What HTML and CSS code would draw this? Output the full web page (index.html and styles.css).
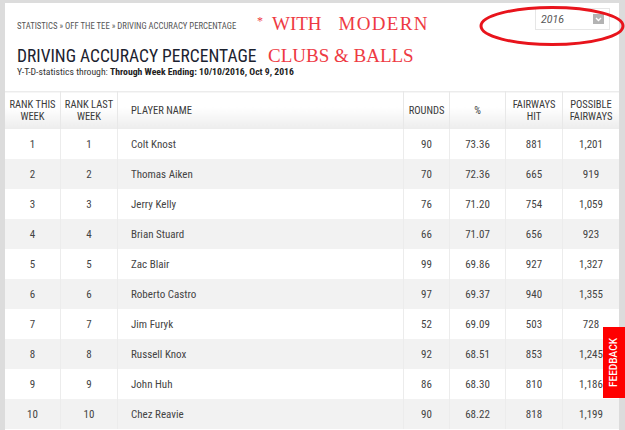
FILE: index.html
```html
<!DOCTYPE html>
<html>
<head>
<meta charset="utf-8">
<link rel="stylesheet" href="styles.css">
</head>
<body>
<div class="page">
  <div class="top">
    <div class="heading">
      <div class="crumbs">STATISTICS » OFF THE TEE » DRIVING ACCURACY PERCENTAGE</div>
      <h1 class="title">DRIVING ACCURACY PERCENTAGE</h1>
      <div class="sub">Y-T-D-statistics through: <b>Through Week Ending: 10/10/2016, Oct 9, 2016</b></div>
    </div>
    <div class="select">
      <span class="year">2016</span>
      <span class="arrow"><svg width="11" height="10" viewBox="0 0 11 10"><path d="M3 4 L5.5 6.5 L8 4" fill="none" stroke="#fff" stroke-width="1.4"/></svg></span>
    </div>
  </div>
  <table class="stats">
    <thead>
      <tr>
        <th class="c1">RANK THIS<br>WEEK</th>
        <th class="c2">RANK LAST<br>WEEK</th>
        <th class="name">PLAYER NAME</th>
        <th class="c4">ROUNDS</th>
        <th class="c5">%</th>
        <th class="c6">FAIRWAYS<br>HIT</th>
        <th class="c7">POSSIBLE<br>FAIRWAYS</th>
      </tr>
    </thead>
    <tbody>
      <tr><td>1</td><td>1</td><td class="name">Colt Knost</td><td>90</td><td>73.36</td><td>881</td><td>1,201</td></tr>
      <tr><td>2</td><td>2</td><td class="name">Thomas Aiken</td><td>70</td><td>72.36</td><td>665</td><td>919</td></tr>
      <tr><td>3</td><td>3</td><td class="name">Jerry Kelly</td><td>76</td><td>71.20</td><td>754</td><td>1,059</td></tr>
      <tr><td>4</td><td>4</td><td class="name">Brian Stuard</td><td>66</td><td>71.07</td><td>656</td><td>923</td></tr>
      <tr><td>5</td><td>5</td><td class="name">Zac Blair</td><td>99</td><td>69.86</td><td>927</td><td>1,327</td></tr>
      <tr><td>6</td><td>6</td><td class="name">Roberto Castro</td><td>97</td><td>69.37</td><td>940</td><td>1,355</td></tr>
      <tr><td>7</td><td>7</td><td class="name">Jim Furyk</td><td>52</td><td>69.09</td><td>503</td><td>728</td></tr>
      <tr><td>8</td><td>8</td><td class="name">Russell Knox</td><td>92</td><td>68.51</td><td>853</td><td>1,245</td></tr>
      <tr><td>9</td><td>9</td><td class="name">John Huh</td><td>86</td><td>68.30</td><td>810</td><td>1,186</td></tr>
      <tr><td>10</td><td>10</td><td class="name">Chez Reavie</td><td>90</td><td>68.22</td><td>818</td><td>1,199</td></tr>
    </tbody>
  </table>
</div>
<div class="note note1"><span class="star">*</span><span class="w1">WITH</span><span class="w2">MODERN</span></div>
<div class="note note2">CLUBS &amp; BALLS</div>
<svg class="circle" width="150" height="44" viewBox="0 0 150 44"><ellipse cx="74" cy="20" rx="71" ry="18.5" fill="none" stroke="#e8141c" stroke-width="3"/></svg>
<div class="feedback"><span>FEEDBACK</span></div>
</body>
</html>
```

FILE: styles.css
```css
html, body {
  margin: 0;
  padding: 0;
  background: #dcdcdc;
  height: 100%;
  overflow: hidden;
}
body {
  font-family: "Roboto Condensed", Roboto, "Liberation Sans", sans-serif;
  color: #333;
  position: relative;
}
.page {
  margin: 3px 0 0 5px;
  width: 614px;
  height: 427px;
  background: #fff;
}
.top {
  display: flex;
  justify-content: space-between;
  align-items: flex-start;
  padding: 5px 9px 0 12px;
}
.heading {
  padding-top: 12px;
}
.crumbs {
  font-size: 8.7px;
  line-height: 13px;
  color: #555;
}
.title {
  margin: 13px 0 0 0;
  font-size: 17.5px;
  line-height: 20px;
  font-weight: 400;
  color: #1c2230;
}
.sub {
  font-size: 9.7px;
  line-height: 12px;
  color: #333;
}
.sub b {
  font-weight: 700;
  color: #222;
}
.select {
  width: 75px;
  height: 22px;
  box-sizing: border-box;
  border: 1px solid #e6e6e6;
  display: flex;
  align-items: center;
  justify-content: space-between;
  padding: 0 5px 0 5px;
}
.year {
  font-family: Roboto, sans-serif;
  font-style: italic;
  font-size: 10.5px;
  color: #555;
}
.arrow {
  width: 11px;
  height: 10px;
  background: #b3b3b3;
  display: flex;
}
.stats {
  margin-top: 13px;
  width: 614px;
  border-collapse: collapse;
  table-layout: fixed;
  font-size: 11px;
  color: #444;
}
.stats th {
  height: 37px;
  padding: 0;
  font-size: 10.5px;
  font-weight: 400;
  line-height: 12px;
  color: #3a3a3a;
  text-align: center;
  border-top: 1px solid #ececec;
  border-right: 1px solid #e8e8e8;
  background: linear-gradient(#ffffff, #ffffff 40%, #ececec);
}
.stats th.name, .stats td.name {
  text-align: left;
  padding-left: 13px;
}
.stats th:last-child, .stats td:last-child {
  border-right: none;
}
.c1 { width: 55px; }
.c2 { width: 56px; }
.c4 { width: 45px; }
.c5 { width: 55px; }
.c6 { width: 56px; }
.c7 { width: 56px; }
.stats td {
  height: 30px;
  padding: 0;
  text-align: center;
  border-right: 1px solid #ececec;
}
.stats tbody tr:nth-child(even) td {
  background: #f2f2f2;
}
.note {
  position: absolute;
  font-family: "Liberation Serif", serif;
  color: #ee3a43;
  font-size: 19px;
  line-height: 20px;
  white-space: nowrap;
}
.note1 {
  left: 257px;
  top: 14px;
  display: flex;
  align-items: baseline;
}
.note1 .star {
  font-size: 12px;
  position: relative;
  top: -5px;
  margin-right: 9px;
}
.note1 .w2 {
  margin-left: 17px;
  letter-spacing: 1.3px;
}
.note2 {
  left: 268px;
  top: 46px;
}
.circle {
  position: absolute;
  left: 478px;
  top: 6px;
}
.feedback {
  position: absolute;
  left: 603px;
  top: 327px;
  width: 22px;
  height: 71px;
  background: #ff0000;
  display: flex;
  align-items: center;
  justify-content: center;
}
.feedback span {
  transform: rotate(-90deg);
  color: #fff;
  font-family: Roboto, sans-serif;
  font-size: 10px;
  font-weight: 500;
  white-space: nowrap;
}
```
